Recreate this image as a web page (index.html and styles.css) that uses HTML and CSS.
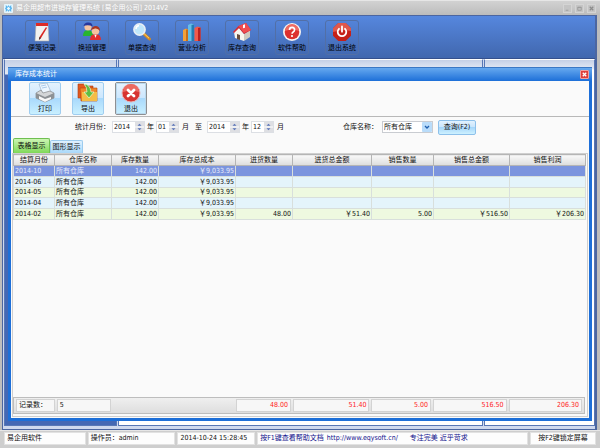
FILE: index.html
```html
<!DOCTYPE html>
<html lang="zh-CN">
<head>
<meta charset="utf-8">
<title>易企用超市进销存管理系统</title>
<link rel="stylesheet" href="styles.css">
</head>
<body>
<div class="app">
  <header class="titlebar">
    <svg class="logo" viewBox="0 0 10 10"><rect width="10" height="10" rx="1" fill="#e4f5fd"/><path d="M2 1l2 2 1-2 1 2 2-2v2l1 2-1 1v3L6 7 5 9 4 7 2 9V6L1 5l1-1z" fill="#58b4ee"/><path d="M3 5l2-2 2 2-2 2z" fill="#e8f8ff"/></svg>
    <h1>易企用超市进销存管理系统 [易企用公司] 2014V2</h1>
    <div class="winbtns">
      <button aria-label="最小化"><svg viewBox="0 0 8 8"><path d="M2 6h3" stroke="#999"/></svg></button>
      <button aria-label="最大化"><svg viewBox="0 0 8 8"><path d="M2 2.5h4v3.5h-4zM2 3h4" fill="none" stroke="#999"/></svg></button>
      <button aria-label="关闭"><svg viewBox="0 0 8 8"><path d="M2 2l4 4M6 2l-4 4" stroke="#8c8c8c" stroke-width="1.4"/></svg></button>
    </div>
  </header>

  <main class="frame">
    <nav class="toolbar">
      <button><svg viewBox="0 0 22 20"><path d="M5 2h12l1 17H4z" fill="#f2f2f0" stroke="#aaa" stroke-width=".6"/><path d="M5 1h12v3H5z" fill="#dd2b25"/><path d="M15 5l1 1-6 10-2 2 .5-3z" fill="#d92923"/><path d="M8.500 15l-.7 3 2.200-2z" fill="#333"/></svg><span>便笺记录</span></button>
      <button><svg viewBox="0 0 22 20"><path d="M2 14q0-6 5-6t5 6z" fill="#27b52f"/><circle cx="7" cy="5" r="3.600" fill="#f3c4a2"/><path d="M2.500 4q1-4 5-3.500 4 0 4 4-4-2-9-.5z" fill="#27379c"/><path d="M9 18q0-6 5.500-6t5.500 6z" fill="#e32f2f"/><circle cx="14.500" cy="9" r="3.800" fill="#f6c3a0"/><path d="M10 8q1-4 5-4 4 .5 4 5-2-3-5-2.500z" fill="#a93520"/><path d="M13.500 13l1 3 1-3z" fill="#fff"/></svg><span>换班管理</span></button>
      <button><svg viewBox="0 0 22 20"><path d="M12.500 11.500l6 5.500" stroke="#d98b20" stroke-width="3" stroke-linecap="round"/><path d="M13 11.500l5 4.700" stroke="#ffd56d" stroke-width="1"/><circle cx="8.500" cy="7.500" r="5.600" fill="#bfe6fb" stroke="#e7eef5" stroke-width="1.600"/><path d="M5 7q0-3 3-3.500" fill="none" stroke="#fff" stroke-width="1.400"/></svg><span>单据查询</span></button>
      <button><svg viewBox="0 0 22 20"><path d="M2 8l3-1.500 2 1V19H2z" fill="#f3a13a"/><path d="M5 7.500l2 0V19H5z" fill="#c96d18"/><path d="M7 3l3-1.500 3 1V19H7z" fill="#65bde8"/><path d="M10.500 3l2.500-.5V19h-2.500z" fill="#247db1"/><path d="M13.500 6l3-1.500 3 1V19h-6z" fill="#f15b4b"/><path d="M17 6l2.500-.5V19H17z" fill="#ba2020"/></svg><span>营业分析</span></button>
      <button><svg viewBox="0 0 22 20"><path d="M3 10l5-4 5 6v7l-9-3z" fill="#f8f6ef"/><path d="M13 12l6-4v7l-6 4z" fill="#cfcac0"/><path d="M2 10L7.500 4 15 1l5 7-7 4-5-6-5 5z" fill="#d92b33"/><path d="M7.500 4L15 1l5 7-7 3z" fill="#f04d50"/><path d="M12 3l2-.7v3.500l-2 .5z" fill="#fff"/><path d="M6 12l3 1v5l-3-1z" fill="#684d3d"/></svg><span>库存查询</span></button>
      <button><svg viewBox="0 0 22 20"><circle cx="11" cy="10" r="9" fill="#f8f3f1"/><circle cx="11" cy="10" r="7.300" fill="#dc302e"/><path d="M4 9a7 7 0 0 1 14 0q-7-3-14 0z" fill="#ef6b61"/><path d="M8.500 8q0-2.600 2.600-2.600T13.500 8q0 1.300-1.300 2-1.100.6-1.100 1.800" fill="none" stroke="#fff" stroke-width="1.700"/><circle cx="11" cy="14" r="1.100" fill="#fff"/></svg><span>软件帮助</span></button>
      <button><svg viewBox="0 0 22 20"><path d="M7.300 1h7.400L20 6.300v7.400L14.700 19H7.300L2 13.700V6.300z" fill="#c52018"/><path d="M7.300 1h7.400L20 6.300V9Q11 7 2 10V6.300z" fill="#e0584b"/><path d="M8 6.800a4.300 4.300 0 1 0 6 0M11 4.500v5.200" fill="none" stroke="#fff" stroke-width="1.800" stroke-linecap="round"/></svg><span>退出系统</span></button>
    </nav>
    <div class="desk">
      <div class="pane side"></div>
      <div class="pane"></div>
      <div class="pane"></div>
    </div>
  </main>

  <footer class="status">
    <span>易企用软件</span>
    <span>操作员：admin</span>
    <span>2014-10-24 15:28:45</span>
    <span class="help"><b>按F1键查看帮助文档</b><a href="#">http://www.eqysoft.cn/</a><b>专注完美 近乎苛求</b></span>
    <span class="lock">按F2键锁定屏幕</span>
  </footer>

  <section class="dialog">
    <header class="dlg-title">
      <h2>库存成本统计</h2>
      <button class="close" aria-label="关闭"><svg viewBox="0 0 8 8"><path d="M2 2l4 4M6 2l-4 4" stroke="#fff" stroke-width="1.500"/></svg></button>
    </header>
    <div class="actions">
      <button><svg viewBox="0 0 22 20"><path d="M5 1l8-1 4 9-8 3z" fill="#eef7ff" stroke="#93abc4" stroke-width=".6"/><path d="M7 3l5-1M8 5l5-1" stroke="#8fb6df" stroke-width=".7"/><path d="M2 10l5-3 2 3 7-2 4 2v5l-9 4-9-4z" fill="#d4d6d8" stroke="#777" stroke-width=".6"/><path d="M2 10l9 4 9-4v5l-9 4-9-4z" fill="#8d9195"/><path d="M5 13l6 3 6-2v2l-6 3-6-3z" fill="#f8f8f8"/></svg><span>打印</span></button>
      <button><svg viewBox="0 0 22 20"><path d="M1 3V1h6l1 2h8v12H1z" fill="#e6591e" stroke="#a33b16" stroke-width=".6"/><path d="M3 5h17v13H4z" fill="#f08629" stroke="#b5430c" stroke-width=".6"/><path d="M5 9h15v9H5z" fill="#f5bd47"/><path d="M7 1q6 0 7 8h3l-5 6-5-6h3q0-5-3-8z" fill="#60be42" stroke="#eaf9d8" stroke-width=".7"/></svg><span>导出</span></button>
      <button class="focused"><svg viewBox="0 0 22 20"><circle cx="11" cy="10" r="9" fill="#d73431" stroke="#e8b2b4"/><path d="M3 9a8 8 0 0 1 16 0q-8-3-16 0z" fill="#eb6a61"/><path d="M8 7l6 6M14 7l-6 6" stroke="#fff" stroke-width="2.800" stroke-linecap="round"/></svg><span>退出</span></button>
    </div>
    <form class="filter">
      <label for="y1">统计月份：</label>
      <span class="spin year"><input id="y1" value="2014"><svg viewBox="0 0 9 10"><path d="M0 0h9v10H0z" fill="#dedfe3"/><path d="M0 5h9" stroke="#fff"/><path d="M2.500 3.700l2-2 2 2zM2.500 6.300l2 2 2-2z" fill="#5873b8"/></svg></span>
      <label for="m1">年</label>
      <span class="spin"><input id="m1" value="01"><svg viewBox="0 0 9 10"><path d="M0 0h9v10H0z" fill="#dedfe3"/><path d="M0 5h9" stroke="#fff"/><path d="M2.500 3.700l2-2 2 2zM2.500 6.300l2 2 2-2z" fill="#5873b8"/></svg></span>
      <span class="unit">月</span>
      <label for="y2" class="to">至</label>
      <span class="spin year"><input id="y2" value="2014"><svg viewBox="0 0 9 10"><path d="M0 0h9v10H0z" fill="#dedfe3"/><path d="M0 5h9" stroke="#fff"/><path d="M2.500 3.700l2-2 2 2zM2.500 6.300l2 2 2-2z" fill="#5873b8"/></svg></span>
      <label for="m2">年</label>
      <span class="spin"><input id="m2" value="12"><svg viewBox="0 0 9 10"><path d="M0 0h9v10H0z" fill="#dedfe3"/><path d="M0 5h9" stroke="#fff"/><path d="M2.500 3.700l2-2 2 2zM2.500 6.300l2 2 2-2z" fill="#5873b8"/></svg></span>
      <span class="unit">月</span>
      <label for="store" class="store">仓库名称：</label>
      <span class="drop"><select id="store"><option>所有仓库</option></select><svg viewBox="0 0 10 10"><rect width="10" height="10" rx="1" fill="#b9dcfa"/><path d="M3 4l2 2 2-2" fill="none" stroke="#1f5fae" stroke-width="1.300"/></svg></span>
      <button type="button" class="query">查询(F2)</button>
    </form>
    <div class="tabs">
      <button class="tab on">表格显示</button><button class="tab">图形显示</button>
    </div>
    <div class="sheet">
      <table>
        <colgroup><col class="c41"><col class="c57"><col class="c47"><col class="c77"><col class="c57"><col class="c79"><col class="c62"><col class="c76"><col class="c76"></colgroup>
        <thead><tr><th>结算月份</th><th>仓库名称</th><th>库存数量</th><th>库存总成本</th><th>进货数量</th><th>进货总金额</th><th>销售数量</th><th>销售总金额</th><th>销售利润</th></tr></thead>
        <tbody>
          <tr class="sel"><td>2014-10</td><td>所有仓库</td><td>142.00</td><td>￥9,033.95</td><td></td><td></td><td></td><td></td><td></td></tr>
          <tr><td>2014-06</td><td>所有仓库</td><td>142.00</td><td>￥9,033.95</td><td></td><td></td><td></td><td></td><td></td></tr>
          <tr><td>2014-05</td><td>所有仓库</td><td>142.00</td><td>￥9,033.95</td><td></td><td></td><td></td><td></td><td></td></tr>
          <tr><td>2014-04</td><td>所有仓库</td><td>142.00</td><td>￥9,033.95</td><td></td><td></td><td></td><td></td><td></td></tr>
          <tr><td>2014-02</td><td>所有仓库</td><td>142.00</td><td>￥9,033.95</td><td>48.00</td><td>￥51.40</td><td>5.00</td><td>￥516.50</td><td>￥206.30</td></tr>
        </tbody>
      </table>
      <div class="totals">
        <span class="plain">记录数：</span><span class="plain">5</span><i></i><i></i><span>48.00</span><span>51.40</span><span>5.00</span><span>516.50</span><span>206.30</span>
      </div>
    </div>
  </section>
</div>
</body>
</html>
```
FILE: styles.css
```css
* { box-sizing: border-box; }

body {
  margin: 0;
  font: 7px/9px "DejaVu Sans Condensed", "Noto Sans CJK SC", sans-serif;
  color: #111;
}

button, input, select {
  font: inherit;
  color: inherit;
  margin: 0;
  padding: 0;
  border: 0;
  background: none;
}

svg { display: block; flex: none; }
h1, h2 { margin: 0; font: inherit; }

.app {
  position: relative;
  display: flex;
  flex-direction: column;
  height: 100vh;
  background: #bdbdbd;
}

/* Main window title */
.titlebar {
  display: flex;
  align-items: center;
  flex: none;
  height: 15px;
  padding: 0 4px;
  gap: 3px;
  border-top: 1px solid #e6e6e6;
  background: linear-gradient(#d2d2d2, #bcbcbc);
}
.logo { width: 9px; height: 9px; }
.titlebar h1 { flex: 1; color: #fff; }
.winbtns { display: flex; gap: 3px; }
.winbtns button {
  width: 9px;
  height: 9px;
  border: 1px solid #d4d4d4;
  background: #c4c4c4;
}
.winbtns svg { width: 7px; height: 7px; }

.frame {
  display: flex;
  flex-direction: column;
  flex: 1;
  margin: 0 3px 0 2px;
  border: 1px solid #4c66a0;
  border-right-width: 2px;
  background: #cfd9ee;
}

/* Main toolbar */
.toolbar {
  display: flex;
  align-items: center;
  flex: none;
  gap: 16px;
  height: 43px;
  padding: 0 22px;
  border-bottom: 1px solid #35508c;
  background: linear-gradient(#5687de, #4167ae);
}
.toolbar button {
  display: flex;
  flex-direction: column;
  align-items: center;
  justify-content: center;
  gap: 2px;
  width: 34px;
  height: 35px;
  border: 1px solid #526fa6;
  border-radius: 3px;
  white-space: nowrap;
  color: #000;
}
.toolbar svg { width: 22px; height: 20px; }

.desk {
  display: grid;
  grid-template-columns: 113fr 364fr 111fr;
  gap: 1px;
  flex: 1;
  padding: 0 0 3px 1px;
}
.pane {
  border: 1px solid #5877b5;
  border-top-color: #fff;
  background: linear-gradient(#c5d0e6, #e4eaf5 9px, #fff 10px);
}
.pane.side { background: linear-gradient(#c5d0e6, #e4eaf5 14px, #4468b4 15px); }

/* Status bar */
.status {
  display: grid;
  grid-template-columns: 82fr 88fr 78fr 272fr 66fr;
  gap: 2px;
  flex: none;
  height: 18px;
  padding: 1px 4px 3px;
  border-top: 1px solid #e6e6e6;
  background: #cecece;
}
.status > span {
  padding: 1px 2px;
  border: 1px solid #e2e2e2;
  background: #fdfdfd;
  white-space: nowrap;
}
.status .help { display: flex; color: #10108c; }
.help b { font-weight: normal; }
.help a { color: inherit; text-decoration: none; margin: 0 12px 0 3px; }
.status .lock { padding-left: 7px; }

/* Report window */
.dialog {
  position: absolute;
  inset: 67px 8px 27px 8px;
  display: flex;
  flex-direction: column;
  border: solid #1d6fd8;
  border-width: 0 3px 3px;
  background: #fafafa;
}
.dlg-title {
  display: flex;
  align-items: center;
  justify-content: space-between;
  flex: none;
  height: 14px;
  margin: 0 -3px;
  padding: 0 3px 0 7px;
  border-top: 1px solid #3b78c4;
  background: linear-gradient(#66a9ef, #1d6fd8);
  color: #fff;
}
.close {
  width: 9px;
  height: 9px;
  border: 1px solid #f4a09c;
  border-radius: 1px;
  background: #e0403c;
}
.close svg { width: 7px; height: 7px; }

.actions {
  display: flex;
  align-items: center;
  flex: none;
  gap: 11px;
  height: 36px;
  padding: 0 18px;
  border-bottom: 1px solid #b8b8b8;
}
.actions button {
  display: flex;
  flex-direction: column;
  align-items: center;
  justify-content: center;
  gap: 2px;
  width: 32px;
  height: 33px;
  border: 1px solid #9fcdf0;
  border-radius: 2px;
  background: linear-gradient(#e4f2fe, #cbe6fd 50%, #a9d9fc 50%, #c9f0ff);
}
.actions svg { width: 22px; height: 20px; }
.actions .focused { border: 1px solid #8d8f92; outline: 1px solid #b9d9ee; outline-offset: -2px; }

.filter {
  display: flex;
  align-items: center;
  flex: none;
  gap: 2px;
  height: 20px;
  padding-left: 64px;
  white-space: nowrap;
}
.spin {
  display: flex;
  width: 23px;
  height: 12px;
  border: 1px solid #dcdfe4;
  background: #fff;
}
.spin.year { width: 33px; }
.spin input { flex: 1; min-width: 0; padding-left: 1px; }
.spin svg { width: 9px; height: 10px; }
.unit { margin: 0 4px 0 1px; }
.filter .to { margin-right: 3px; }
.filter .store { margin-left: 53px; padding-right: 2px; }
.drop {
  position: relative;
  width: 51px;
  height: 12px;
  border: 1px solid #c9ccd1;
  background: #fff;
}
.drop select { appearance: none; display: block; width: 100%; height: 10px; padding-left: 1px; }
.drop svg { position: absolute; top: 0; right: 0; width: 10px; height: 10px; pointer-events: none; }
.query {
  width: 38px;
  height: 15px;
  margin-left: 3px;
  border: 1px solid #8dc0ea;
  border-radius: 2px;
  background: linear-gradient(#e2f2fe, #c8e4fc 50%, #a6d6fa 50%, #cdf1ff);
}

.tabs {
  display: flex;
  align-items: flex-end;
  flex: none;
  height: 16px;
  padding-left: 2px;
}
.tab {
  width: 33px;
  height: 13px;
  border: 1px solid #9ccbee;
  border-bottom: 0;
  border-radius: 2px 2px 0 0;
  background: linear-gradient(#e0f1fe, #a9d8fa);
  white-space: nowrap;
}
.tab.on {
  width: 37px;
  height: 15px;
  border-color: #6fbf50;
  background: linear-gradient(#cdf5b4, #7fd858);
}

/* Data sheet */
.sheet {
  display: flex;
  flex-direction: column;
  flex: 1;
  justify-content: space-between;
  margin: 0 1px 1px;
  padding: 0 2px 2px 0;
  border: 1px solid #cfcfcf;
}
table {
  table-layout: fixed;
  width: 100%;
  height: 66px;
  border-collapse: collapse;
  line-height: 8px;
}
.c41 { width: 41px; }
.c47 { width: 47px; }
.c57 { width: 57px; }
.c62 { width: 62px; }
.c76 { width: 76px; }
.c77 { width: 77px; }
.c79 { width: 79px; }
th, td { padding: 0 1px; white-space: nowrap; }
th {
  height: 11px;
  border: 1px solid #b5b5b5;
  background: linear-gradient(#f9f9f9, #dcdcdc);
  font-weight: normal;
}
td {
  border: 1px solid #d8dfdc;
  border-left-color: #d8dcdf;
  text-align: right;
}
td:nth-child(-n+2) { text-align: left; }
tbody tr:nth-child(even) { background: #e4f4fb; }
tbody tr:nth-child(odd) { background: #eef9e0; }
tbody tr.sel { background: #7b94de; color: #e9edfb; }

.totals {
  display: grid;
  grid-template-columns: 41fr 57fr 47fr 77fr 57fr 79fr 62fr 76fr 76fr;
  height: 17px;
  padding: 1px;
  border: 1px solid #bdbdbd;
  background: linear-gradient(#efefef, #dedede);
}
.totals span {
  margin: 0 1px;
  padding: 1px 2px;
  border: 1px solid #d3d3d3;
  background: #f7f7f7;
  color: #f22;
  text-align: right;
  white-space: nowrap;
}
.totals .plain { color: #111; text-align: left; }
```
